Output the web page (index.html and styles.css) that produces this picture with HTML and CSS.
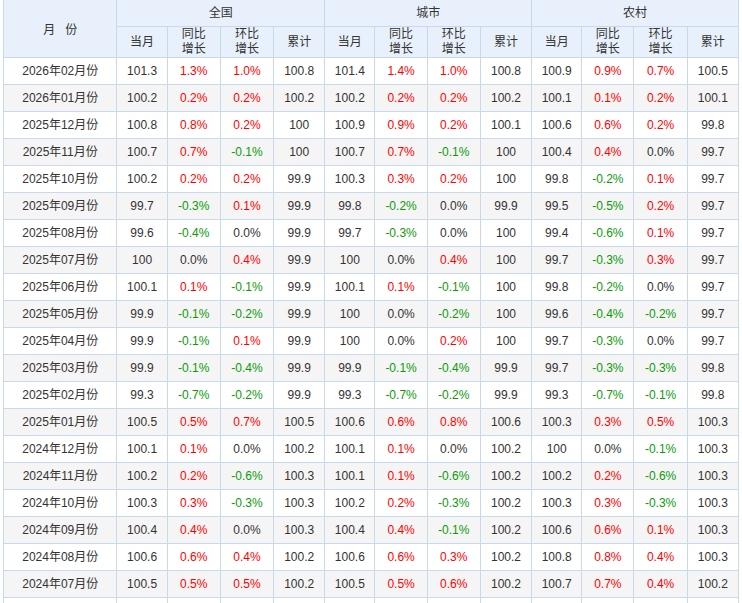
FILE: index.html
```html
<!DOCTYPE html>
<html lang="zh-CN">
<head>
<meta charset="utf-8">
<title>居民消费价格指数</title>
<link rel="stylesheet" href="styles.css">
</head>
<body>
<table class="tbl">
<colgroup>
<col class="c-month">
<col class="c1"><col class="c2"><col class="c3"><col class="c4">
<col class="c1"><col class="c2b"><col class="c3"><col class="c4">
<col class="c1"><col class="c2b"><col class="c3"><col class="c4">
</colgroup>
<thead>
<tr class="h1">
<th rowspan="2" class="month-h">月&nbsp;&nbsp;&nbsp;份</th>
<th colspan="4"><div class="cell">全国</div></th>
<th colspan="4"><div class="cell">城市</div></th>
<th colspan="4"><div class="cell">农村</div></th>
</tr>
<tr class="h2">
<th><div class="cell">当月</div></th><th><div class="cell">同比<br>增长</div></th><th><div class="cell">环比<br>增长</div></th><th><div class="cell">累计</div></th>
<th><div class="cell">当月</div></th><th><div class="cell">同比<br>增长</div></th><th><div class="cell">环比<br>增长</div></th><th><div class="cell">累计</div></th>
<th><div class="cell">当月</div></th><th><div class="cell">同比<br>增长</div></th><th><div class="cell">环比<br>增长</div></th><th><div class="cell">累计</div></th>
</tr>
</thead>
<tbody id="rows"></tbody>
</table>
<script src="app.js"></script>
</body>
</html>
```

FILE: app.js
```js
var data = [
["2026年02月份","101.3","1.3%","1.0%","100.8","101.4","1.4%","1.0%","100.8","100.9","0.9%","0.7%","100.5"],
["2026年01月份","100.2","0.2%","0.2%","100.2","100.2","0.2%","0.2%","100.2","100.1","0.1%","0.2%","100.1"],
["2025年12月份","100.8","0.8%","0.2%","100","100.9","0.9%","0.2%","100.1","100.6","0.6%","0.2%","99.8"],
["2025年11月份","100.7","0.7%","-0.1%","100","100.7","0.7%","-0.1%","100","100.4","0.4%","0.0%","99.7"],
["2025年10月份","100.2","0.2%","0.2%","99.9","100.3","0.3%","0.2%","100","99.8","-0.2%","0.1%","99.7"],
["2025年09月份","99.7","-0.3%","0.1%","99.9","99.8","-0.2%","0.0%","99.9","99.5","-0.5%","0.2%","99.7"],
["2025年08月份","99.6","-0.4%","0.0%","99.9","99.7","-0.3%","0.0%","100","99.4","-0.6%","0.1%","99.7"],
["2025年07月份","100","0.0%","0.4%","99.9","100","0.0%","0.4%","100","99.7","-0.3%","0.3%","99.7"],
["2025年06月份","100.1","0.1%","-0.1%","99.9","100.1","0.1%","-0.1%","100","99.8","-0.2%","0.0%","99.7"],
["2025年05月份","99.9","-0.1%","-0.2%","99.9","100","0.0%","-0.2%","100","99.6","-0.4%","-0.2%","99.7"],
["2025年04月份","99.9","-0.1%","0.1%","99.9","100","0.0%","0.2%","100","99.7","-0.3%","0.0%","99.7"],
["2025年03月份","99.9","-0.1%","-0.4%","99.9","99.9","-0.1%","-0.4%","99.9","99.7","-0.3%","-0.3%","99.8"],
["2025年02月份","99.3","-0.7%","-0.2%","99.9","99.3","-0.7%","-0.2%","99.9","99.3","-0.7%","-0.1%","99.8"],
["2025年01月份","100.5","0.5%","0.7%","100.5","100.6","0.6%","0.8%","100.6","100.3","0.3%","0.5%","100.3"],
["2024年12月份","100.1","0.1%","0.0%","100.2","100.1","0.1%","0.0%","100.2","100","0.0%","-0.1%","100.3"],
["2024年11月份","100.2","0.2%","-0.6%","100.3","100.1","0.1%","-0.6%","100.2","100.2","0.2%","-0.6%","100.3"],
["2024年10月份","100.3","0.3%","-0.3%","100.3","100.2","0.2%","-0.3%","100.2","100.3","0.3%","-0.3%","100.3"],
["2024年09月份","100.4","0.4%","0.0%","100.3","100.4","0.4%","-0.1%","100.2","100.6","0.6%","0.1%","100.3"],
["2024年08月份","100.6","0.6%","0.4%","100.2","100.6","0.6%","0.3%","100.2","100.8","0.8%","0.4%","100.3"],
["2024年07月份","100.5","0.5%","0.5%","100.2","100.5","0.5%","0.6%","100.2","100.7","0.7%","0.4%","100.2"]
];
var tb = document.getElementById("rows");
var html = "";
data.forEach(function (r) {
  html += "<tr>";
  r.forEach(function (v, i) {
    var cls = "";
    var pct = i > 0 && (i % 4 === 2 || i % 4 === 3);
    if (pct) {
      var n = parseFloat(v);
      cls = n > 0 ? "up" : (n < 0 ? "down" : "");
    }
    html += "<td" + (cls ? ' class="' + cls + '"' : "") + '><div class="cell">' + v + "</div></td>";
  });
  html += "</tr>";
});
/* the next row of the table begins just below the visible area */
html += '<tr class="more">';
for (var k = 0; k < 13; k++) { html += '<td><div class="cell"></div></td>'; }
html += "</tr>";
tb.innerHTML = html;
```

FILE: styles.css
```css
html, body {
  margin: 0;
  padding: 0;
  background: #fff;
}
body {
  padding-left: 3px;
  font-family: "Liberation Sans", "Noto Sans CJK SC", sans-serif;
  font-size: 12px;
  color: #333;
}
.tbl {
  border-collapse: collapse;
  table-layout: fixed;
  width: 736px;
}
.c-month { width: 113px; }
.c1 { width: 50px; }
.c2 { width: 53px; }
.c2b { width: 52px; }
.c3 { width: 53px; }
.c4 { width: 51px; }
.tbl th, .tbl td {
  border: 1px solid #c8d9ec;
  text-align: center;
  padding: 0;
  font-weight: normal;
  vertical-align: middle;
}
.tbl th {
  background: #e8f1fb;
  color: #333;
}
.cell {
  display: flex;
  align-items: center;
  justify-content: center;
  text-align: center;
  line-height: 15px;
}
.h1 th { border-top: 0; }
.h1 .cell { height: 26px; }
.h2 .cell { height: 30px; }
.tbl td .cell { height: 26px; }
.tbl tbody tr:nth-child(even) td { background: #f5f5f5; }
.tbl td.up { color: #ff0000; }
.tbl td.down { color: #0a9a0a; }
.tbl tr.more td { background: #fff; }
```
